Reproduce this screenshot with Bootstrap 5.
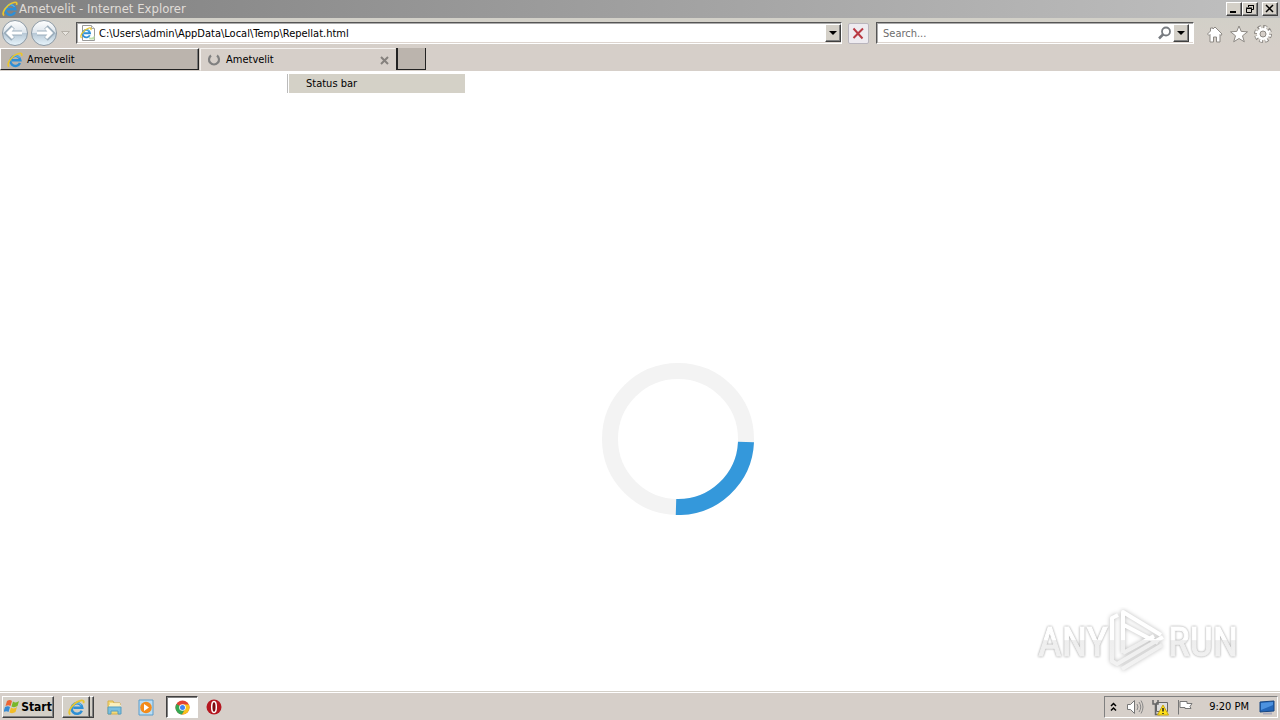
<!DOCTYPE html>
<html lang="en">
<head>
<meta charset="utf-8">
<meta name="viewport" content="width=device-width, initial-scale=1">
<title>Ametvelit - Internet Explorer</title>
<link href="https://cdn.jsdelivr.net/npm/bootstrap@5.3.0/dist/css/bootstrap.min.css" rel="stylesheet">
<style>
:root { --face: #d4d0c8; --chrome: #d6cfc9; --tab: #bbb4ad; }
body { font: 11px/16px "DejaVu Sans Condensed", "DejaVu Sans", sans-serif; color: #000; background: #fff; }
svg { display: block; flex: none; }
button { font: inherit; color: inherit; padding: 0; border: 0; background: none; flex: none; display: flex; align-items: center; justify-content: center; }
.titlebar { height: 18px; background: linear-gradient(90deg, #808080, #c0c0c0); color: #e0ddd8; font-size: 13px; padding: 0 2px; }
.titlebar h1 { font: inherit; line-height: 18px; margin: 0; padding-left: 1px; }
.raised { background: var(--face); border: 1px solid; border-color: #fff #404040 #404040 #fff; box-shadow: inset -1px -1px #808080; }
.winbtn { width: 16px; height: 14px; }
.toolbar { height: 30px; background: linear-gradient(#d2d0c8, var(--chrome)); }
.field { height: 22px; background: #fff; border: 1px solid; border-color: #555 #fff #fff #555; box-shadow: inset 1px 1px #aaa, inset 0 -1px #ddd5cf; padding: 1px 2px; min-width: 0; }
.field input { font: inherit; border: 0; background: none; outline: 0; min-width: 0; padding: 0; height: 18px; color: #000; }
.field input::placeholder { color: #6d6d6d; opacity: 1; }
.drop { width: 16px; height: 18px; }
.addressbox { padding-right: 0; }
.searchbox { width: 318px; flex: none; }
.searchbox .drop { margin: 0 2px 0 1px; }
.stopbtn { width: 21px; height: 21px; border: 1px solid #b9b5bd; border-radius: 2px; background: #eeebf0; margin: 0 7px 0 6px; }
.tools { width: 86px; padding: 2px 0 0 12px; gap: 6px; }
.tabs { height: 23px; background: var(--chrome); }
.pagetab { width: 199px; height: 22px; justify-content: flex-start; padding: 1px 6px 0 6px; border: 1px solid; }
.tabidle { background: var(--tab); border-color: #fff #222 #222 #fff; box-shadow: inset -1px 0 #777; }
.tabopen { width: 196px; height: 23px; border-color: #f4f1ee transparent transparent #f4f1ee; margin-left: 1px; }
.newtab { width: 30px; height: 22px; background: var(--tab); border: solid #222; border-width: 0 1px 1px 2px; }
.statusmenu { left: 287px; top: 3px; width: 178px; height: 19px; padding-left: 18px; line-height: 20px; background: #d4d1c7; border-left: 1px solid #bbb; box-shadow: inset 1px 0 #fff; }
.canvas { padding: 116px 0 0 75px; }
.watermark { right: 40px; bottom: 16px; }
.wordmark { font: 41px "Roboto Condensed", Roboto, sans-serif; }
.taskbar { height: 29px; background: var(--chrome); border-top: 1px solid #d4d0c8; box-shadow: inset 0 1px #fff; padding: 4px 2px 2px 2px; }
.startbtn { width: 52px; height: 22px; font-size: 12px; font-weight: 700; }
.taskitem { width: 32px; height: 22px; }
.pressed { background: #fff; border: 1px solid; border-color: #404040 #fff #fff #404040; box-shadow: inset 1px 1px #808080; }
.stacked { width: 28px; }
.stackedge { width: 4px; height: 22px; border-left: 0; }
.tray { height: 22px; border: 1px solid; border-color: #808080 #fff #fff #808080; padding: 0 1px 0 4px; }
.tray time { padding: 0 10px 0 16px; }
</style>
</head>
<body class="d-flex flex-column min-vh-100">
<svg width="0" height="0" class="position-absolute" aria-hidden="true">
  <defs>
    <linearGradient id="orb" x2="0" y2="1"><stop stop-color="#fff"/><stop offset=".48" stop-color="#dde5ec"/><stop offset=".5" stop-color="#b5c6d4"/><stop offset="1" stop-color="#e8f5fc"/></linearGradient>
    <linearGradient id="shade" gradientUnits="userSpaceOnUse" x1="0" y1="4" x2="0" y2="62"><stop stop-color="#fff"/><stop offset=".5" stop-color="#fff"/><stop offset=".51" stop-color="#eee"/><stop offset="1" stop-color="#f3f3f3"/></linearGradient>
    <symbol id="ie" viewBox="0 0 16 16">
      <path d="M13 11A5 5 0 1 1 13.400 8.300H5" fill="none" stroke="#2e8fd6" stroke-width="2.400"/>
      <path d="M4.500 7a4.300 4.300 0 0 1 8-1" fill="none" stroke="#69c3f0"/>
      <path d="M2 14.600C-1 12 5 3.500 11 1.700 14 .6 15.500 1.600 14.500 4" fill="none" stroke="#e9c52f" stroke-width="1.700"/>
    </symbol>
  </defs>
</svg>

<header>
  <div class="titlebar d-flex align-items-center">
    <svg width="16" height="16"><use href="#ie"/></svg>
    <h1 class="flex-grow-1">Ametvelit - Internet Explorer</h1>
    <button class="winbtn raised" aria-label="Minimize"><svg width="12" height="10"><path d="M2 8h6" stroke="#000" stroke-width="2"/></svg></button>
    <button class="winbtn raised" aria-label="Restore"><svg width="12" height="10"><path d="M4.500 3V1.500h5v4H8M4 1.500h6M2.500 4.500h5v4h-5zM2 4h6" fill="none" stroke="#000"/></svg></button>
    <button class="winbtn raised ms-1" aria-label="Close"><svg width="12" height="10"><path d="M2 1l7 7M9 1L2 8" stroke="#000" stroke-width="1.500"/></svg></button>
  </div>

  <div class="toolbar d-flex align-items-center">
    <button aria-label="Back"><svg width="30" height="28" viewBox="0 0 30 28"><circle cx="15" cy="14" r="12.500" fill="url(#orb)" stroke="#8d9aa5"/><path d="M13 8l-6 6 6 6M8 14h14" fill="none" stroke="#9caebc" stroke-width="5"/><path d="M13 9l-5 5 5 5M9 14h13" fill="none" stroke="#fff" stroke-width="3"/></svg></button>
    <button aria-label="Forward"><svg width="28" height="28" viewBox="1 0 28 28"><circle cx="15" cy="14" r="12.500" fill="url(#orb)" stroke="#8d9aa5"/><path d="M17 8l6 6-6 6M22 14H8" fill="none" stroke="#9caebc" stroke-width="5"/><path d="M17 9l5 5-5 5M21 14H8" fill="none" stroke="#fff" stroke-width="3"/></svg></button>
    <button aria-label="Recent pages"><svg width="18" height="10"><path d="M3.500 3.500h8l-4 4z" fill="#e8e5e0" stroke="#b5b0a8"/></svg></button>
    <div class="field addressbox d-flex align-items-center flex-grow-1">
      <svg width="20" height="18" viewBox="0 0 20 18"><path d="M3.500 1.500h9l3 3v12h-12z" fill="#fff" stroke="#999"/><path d="M12.500 1.500v3h3" fill="#eee" stroke="#aaa"/><path d="M9.500 12.500q3 3 6-1v4h-5" fill="#bfe0ac"/><svg x="1" y="3" width="12" height="12"><use href="#ie"/></svg></svg>
      <input class="flex-grow-1" type="text" aria-label="Address" value="C:\Users\admin\AppData\Local\Temp\Repellat.html">
      <button class="drop raised" aria-label="Show address list"><svg width="8" height="5"><path d="M0 0h8L4 4z"/></svg></button>
    </div>
    <button class="stopbtn" aria-label="Stop"><svg width="13" height="13"><path d="M1.500 1.500l9 10M11 1.500L1.500 11" stroke="#b93a44" stroke-width="2"/></svg></button>
    <div class="field searchbox d-flex align-items-center">
      <input class="flex-grow-1 ms-1 ps-0" type="text" aria-label="Search" placeholder="Search...">
      <button aria-label="Search"><svg width="15" height="15"><circle cx="9" cy="5.500" r="4" fill="none" stroke="#777b80" stroke-width="1.800"/><path d="M6.500 8L2 12.500" stroke="#777b80" stroke-width="2.500"/></svg></button>
      <button class="drop raised" aria-label="Search options"><svg width="8" height="5"><path d="M0 0h8L4 4z"/></svg></button>
    </div>
    <div class="tools d-flex align-items-center">
      <button aria-label="Home"><svg width="18" height="18" viewBox="0 0 18 18"><path d="M9 2l7 7-1 1.500-1-1V17h-3.500v-5h-3v5H4V9.500l-1 1L1.500 9 4.500 6V3H7v1z" fill="#fff" stroke="#8d8984"/></svg></button>
      <button aria-label="Favorites"><svg width="18" height="18" viewBox="0 0 18 18"><path d="M9 1l2.200 5.400 6.300.4-5 4 1.800 6L9 13.500l-5.300 3.300 1.800-6-5-4 6.300-.4z" fill="#fff" stroke="#8d8984"/></svg></button>
      <button aria-label="Tools"><svg width="18" height="18" viewBox="0 0 18 18"><circle cx="9" cy="9" r="7" fill="none" stroke="#8d8984" stroke-width="4" stroke-dasharray="3.500 1.998"/><circle cx="9" cy="9" r="6.500" fill="none" stroke="#fff" stroke-width="3.200" stroke-dasharray="2 3.105" stroke-dashoffset="-.6"/><circle cx="9" cy="9" r="4.600" fill="none" stroke="#fff" stroke-width="3"/><circle cx="9" cy="9" r="3" fill="#d6cfc9" stroke="#8d8984"/></svg></button>
    </div>
  </div>

  <nav class="tabs d-flex" aria-label="Tabs">
    <button class="pagetab tabidle"><svg width="16" height="16"><use href="#ie"/></svg><span class="ps-1">Ametvelit</span></button>
    <button class="pagetab tabopen"><svg width="15" height="14"><path d="M4 2.500a5 5 0 1 0 6 0" fill="none" stroke="#808080" stroke-width="2.200"/></svg><span class="ps-1 flex-grow-1 text-start">Ametvelit</span><svg width="9" height="9"><path d="M1 1l7 7M8 1L1 8" stroke="#85817d" stroke-width="2"/></svg></button>
    <button class="newtab" aria-label="New tab"></button>
  </nav>
</header>

<main class="canvas position-relative flex-grow-1 d-flex align-items-center justify-content-center">
  <div class="statusmenu position-absolute">Status bar</div>
  <svg width="152" height="152" viewBox="0 0 152 152" role="img" aria-label="Loading"><circle cx="76" cy="76" r="68" fill="none" stroke="#f3f3f3" stroke-width="16"/><path d="M144 79A68 68 0 0 1 74 144" fill="none" stroke="#3498db" stroke-width="16"/></svg>
  <svg class="watermark position-absolute" width="206" height="68" viewBox="0 0 206 68" role="img" aria-label="ANY RUN">
    <g style="filter:drop-shadow(0 0 2px #bbb)" fill="none" stroke="url(#shade)" stroke-width="4" stroke-linejoin="round">
      <path d="M84 8l-6 3v43l5 3 46-27"/><path d="M89 46V5l38 23M90 18l34 18M89 46l31-17"/><path d="M88 62l40-24"/>
    </g>
    <g class="wordmark" style="filter:drop-shadow(0 0 1px #999)" fill="url(#shade)" stroke="url(#shade)">
      <text x="4" y="49">ANY</text><text x="134" y="49">RUN</text>
    </g>
  </svg>
</main>

<footer class="taskbar d-flex align-items-center">
  <button class="startbtn raised"><svg width="17" height="16" viewBox="0 0 17 16"><path d="M3 2q3-2 5 0L6.500 7q-2-1.500-5 0z" fill="#ed6534"/><path d="M9 2.500q3 2 6-.5L13.500 7q-3 2-6 .5z" fill="#79b72b"/><path d="M1 8q3-1.500 5 0l-1.500 5q-2-1.500-5 0z" fill="#368bd4"/><path d="M7 8.500q3 2 6-.5l-1.500 5q-3 2-6 .5z" fill="#f2bd28"/></svg>Start</button>
  <button class="taskitem stacked raised ms-2" aria-label="Internet Explorer"><svg width="17" height="17"><use href="#ie"/></svg></button><span class="stackedge raised"></span>
  <button class="taskitem ms-1" aria-label="File Explorer"><svg width="17" height="17" viewBox="0 0 17 17"><path d="M2 2h5l1 2h6v11H2z" fill="#f4d977" stroke="#d6af4a"/><path d="M4 5h10M3 7h12" stroke="#fff8d5" stroke-width="1.500"/><path d="M2 8h13v7h-3v-3H5v3H2z" fill="#7cc0df" stroke="#549dc2"/></svg></button>
  <button class="taskitem" aria-label="Media Player"><svg width="17" height="17" viewBox="0 0 17 17"><path d="M1 1h14v15H1z" fill="#b9ddf4" stroke="#5a9ccb"/><circle cx="8" cy="8.500" r="5.800" fill="#f38b1b"/><path d="M6 5v7l5-3.500z" fill="#fff"/></svg></button>
  <button class="taskitem pressed ms-1" aria-label="Chrome"><svg width="15" height="15" viewBox="0 0 15 15"><circle cx="7.500" cy="7.500" r="7" fill="#e34133"/><path d="M7.500 7.500L1.400 4A7 7 0 0 0 7 14.500l3.500-6z" fill="#35a853"/><path d="M7.500 4.500h6.300A7 7 0 0 1 7 14.500l3.500-6z" fill="#f8c21b"/><circle cx="7.500" cy="7.500" r="3.300" fill="#fff"/><circle cx="7.500" cy="7.500" r="2.500" fill="#4385f4"/></svg></button>
  <button class="taskitem" aria-label="Opera"><svg width="16" height="16" viewBox="0 0 16 16"><circle cx="8" cy="8" r="7.500" fill="#b51720"/><ellipse cx="8" cy="8" rx="2.300" ry="5.500" fill="#7d0b10" stroke="#fff" stroke-width="1.500"/></svg></button>
  <div class="tray d-flex align-items-center ms-auto">
    <button aria-label="Show hidden icons"><svg width="9" height="12"><path d="M2 5l2.500-2.500L7 5M2 9.500L4.500 7 7 9.500" fill="none" stroke="#000" stroke-width="1.500"/></svg></button>
    <button class="ms-2" aria-label="Volume"><svg width="18" height="16" viewBox="0 0 18 16"><path d="M1.500 5.500h3l4-4v13l-4-4h-3z" fill="#fff" stroke="#777"/><path d="M11 5q2 3 0 6M13 3q3.500 5 0 10M15 1.500q4 6.500 0 13" fill="none" stroke="#888"/></svg></button>
    <button class="ms-2" aria-label="Network"><svg width="17" height="17" viewBox="0 0 17 17"><path d="M4.500 3.500h11v9h-11z" fill="#ddd" stroke="#666"/><path d="M1 1v4h5V1M3.500 5v10.500H8" fill="none" stroke="#666" stroke-width="1.500"/><path d="M11 6l5.500 10h-11z" fill="#ffe019" stroke="#c7a60e"/><path d="M11 9v3.500M11 14v1" stroke="#222" stroke-width="1.500"/></svg></button>
    <button class="ms-2" aria-label="Action Center"><svg width="16" height="16" viewBox="0 0 16 16"><path d="M1.500 1v14.500M3 2.500h7v2h5l-2 3 1 2H8v-1H3z" fill="#fff" stroke="#777"/></svg></button>
    <time>9:20 PM</time>
    <button aria-label="Show desktop"><svg width="17" height="15" viewBox="0 0 17 15"><path d="M1 2l14-1v10l-14 1z" fill="#2466b8" stroke="#174580"/><path d="M2 3l12-1v3L2 10z" fill="#4d92df"/><path d="M4 13.500h9" stroke="#aab" stroke-width="2"/></svg></button>
  </div>
</footer>
<script src="https://cdn.jsdelivr.net/npm/bootstrap@5.3.0/dist/js/bootstrap.bundle.min.js"></script>
</body>
</html>
